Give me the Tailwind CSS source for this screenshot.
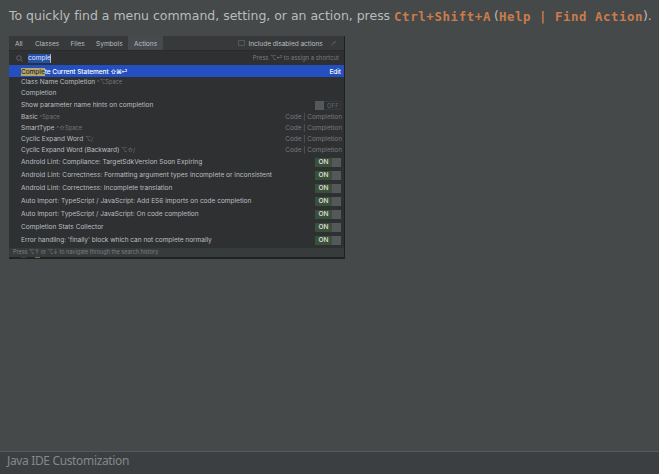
<!DOCTYPE html>
<html lang="en"><head><meta charset="utf-8"><title>Find Action</title>
<script src="https://cdn.jsdelivr.net/npm/@tailwindcss/browser@4"></script></head>
<body class="w-[659px] h-[474px] overflow-hidden bg-[#464949] whitespace-nowrap flex flex-col">
<p class="h-[36px] pl-[9px] pt-[6px] flex text-[12.5px]/[20px] tracking-[-0.02px] text-[#b9bcbd] font-['DejaVu_Sans',sans-serif]">
  <span class="w-[385px]">To quickly find a menu command, setting, or an action, press</span>
  <b class="w-[100px] text-[12.4px]/[21px] tracking-[0.62px] text-[#cb7c4b] font-['DejaVu_Sans_Mono',monospace]">Ctrl+Shift+A</b>
  <span class="w-[5px]">(</span>
  <b class="w-[144px] text-[12.4px]/[21px] tracking-[0.54px] text-[#cb7c4b] font-['DejaVu_Sans_Mono',monospace]">Help | Find Action</b>
  <span>).</span>
</p>
<main class="ml-[9px] w-[336px] h-[223px] shrink-0 flex flex-col bg-[#2e3032] border-r border-[#1f2122] text-[6.55px] text-[#bcbec0] font-[Inter,'DejaVu_Sans',sans-serif]">
  <nav class="h-[14px] shrink-0 flex items-center bg-[#37393b] leading-[8px]">
    <span class="w-[26px] pl-[6px] pt-px">All</span>
    <span class="w-[35.5px] pt-px">Classes</span>
    <span class="w-[25.5px] pt-px">Files</span>
    <span class="w-[32px] pt-px">Symbols</span>
    <span class="w-[35px] h-full pt-px flex items-center justify-center bg-[#464a4e]">Actions</span>
    <span class="ml-[75px] size-[6.5px] border border-[#55585a]"></span>
    <span class="ml-[4px] w-[81px] pt-px tracking-[-0.03px]">Include disabled actions</span>
    <svg class="size-[7px]" viewBox="0 0 7 7" fill="none" stroke="#505355"><path d="M1 6 3 4" stroke-width=".8"/><path d="M2.8 4.2 5.8 1.2" stroke-width="1.7"/></svg>
  </nav>
  <div class="h-[15px] shrink-0 flex items-center border-t border-[#292b2c] pl-[7px] pr-[5px]">
    <svg class="size-[7px]" viewBox="0 0 7 7" fill="none" stroke="#737678" stroke-width=".7"><circle cx="3" cy="3" r="2.3"/><path d="m4.7 4.7 2 2"/></svg>
    <span class="ml-[5px] h-[9px] leading-[9px] w-[23px] bg-[#2450ae] text-[#e4eaf6] border-r border-[#a3acbd]">comple</span>
    <span class="ml-auto text-[5.95px] text-[#7b7d7f]">Press ⌥⏎ to assign a shortcut</span>
  </div>
  <ul class="h-[183px] shrink-0 flex flex-col">
    <li class="h-[12px] pt-px pl-[12px] pr-[3px] flex items-center bg-[#244fc0] text-white leading-[8px] font-medium tracking-[-0.07px]"><span class="h-[8px] bg-[#b6a56c] text-[#272a2c]">Comple</span>te Current Statement&nbsp;<span class="text-[6px] tracking-[-0.7px]">⇧⌘⏎</span><span class="ml-auto">Edit</span></li>
    <li class="h-[11px] pl-[12px] flex items-center">Class Name Completion&nbsp;<span class="text-[5.6px] text-[#74777a]">^⌥Space</span></li>
    <li class="h-[11px] pl-[12px] flex items-center">Completion</li>
    <li class="h-[13px] pl-[12px] pr-[3px] flex items-center">Show parameter name hints on completion<span class="ml-auto w-[26px] h-[9px] flex items-center border border-[#383b3d] text-[6px] text-[#65686a]"><i class="w-[9px] h-[9px] -ml-px bg-[#55585a]"></i><span class="ml-[3px]">OFF</span></span></li>
    <li class="h-[11px] pl-[12px] pr-[2px] flex items-center">Basic&nbsp;<span class="text-[5.8px] text-[#74777a]">^Space</span><span class="ml-auto text-[6.45px] text-[#777a7c]">Code | Completion</span></li>
    <li class="h-[11px] pl-[12px] pr-[2px] flex items-center">SmartType&nbsp;<span class="text-[5.8px] text-[#74777a]">^⇧Space</span><span class="ml-auto text-[6.45px] text-[#777a7c]">Code | Completion</span></li>
    <li class="h-[11px] pl-[12px] pr-[2px] flex items-center">Cyclic Expand Word&nbsp;<span class="text-[5.8px] text-[#74777a]">⌥/</span><span class="ml-auto text-[6.45px] text-[#777a7c]">Code | Completion</span></li>
    <li class="h-[11px] pl-[12px] pr-[2px] flex items-center"><span class="tracking-[-0.04px]">Cyclic Expand Word (Backward)</span>&nbsp;<span class="text-[5.8px] text-[#74777a]">⌥⇧/</span><span class="ml-auto text-[6.45px] text-[#777a7c]">Code | Completion</span></li>
    <li class="h-[13px] pl-[12px] pr-[3px] flex items-center">Android Lint: Compliance: TargetSdkVersion Soon Expiring<span class="ml-auto w-[26px] h-[9px] flex items-center bg-[#3b5039] text-[#e0e4e0] font-medium pl-[3.5px]">ON<i class="ml-auto w-[9px] h-full bg-[#55585a]"></i></span></li>
    <li class="h-[13px] pl-[12px] pr-[3px] flex items-center"><span class="tracking-[0.015px]">Android Lint: Correctness: Formatting argument types incomplete or inconsistent</span><span class="ml-auto w-[26px] h-[9px] flex items-center bg-[#3b5039] text-[#e0e4e0] font-medium pl-[3.5px]">ON<i class="ml-auto w-[9px] h-full bg-[#55585a]"></i></span></li>
    <li class="h-[13px] pl-[12px] pr-[3px] flex items-center">Android Lint: Correctness: Incomplete translation<span class="ml-auto w-[26px] h-[9px] flex items-center bg-[#3b5039] text-[#e0e4e0] font-medium pl-[3.5px]">ON<i class="ml-auto w-[9px] h-full bg-[#55585a]"></i></span></li>
    <li class="h-[13px] pl-[12px] pr-[3px] flex items-center"><span class="tracking-[-0.012px]">Auto Import: TypeScript / JavaScript: Add ES6 imports on code completion</span><span class="ml-auto w-[26px] h-[9px] flex items-center bg-[#3b5039] text-[#e0e4e0] font-medium pl-[3.5px]">ON<i class="ml-auto w-[9px] h-full bg-[#55585a]"></i></span></li>
    <li class="h-[13px] pl-[12px] pr-[3px] flex items-center"><span class="tracking-[-0.02px]">Auto Import: TypeScript / JavaScript: On code completion</span><span class="ml-auto w-[26px] h-[9px] flex items-center bg-[#3b5039] text-[#e0e4e0] font-medium pl-[3.5px]">ON<i class="ml-auto w-[9px] h-full bg-[#55585a]"></i></span></li>
    <li class="h-[13px] pl-[12px] pr-[3px] flex items-center">Completion Stats Collector<span class="ml-auto w-[26px] h-[9px] flex items-center bg-[#3b5039] text-[#e0e4e0] font-medium pl-[3.5px]">ON<i class="ml-auto w-[9px] h-full bg-[#55585a]"></i></span></li>
    <li class="h-[13px] pl-[12px] pr-[3px] flex items-center"><span class="tracking-[-0.03px]">Error handling: 'finally' block which can not complete normally</span><span class="ml-auto w-[26px] h-[9px] flex items-center bg-[#3b5039] text-[#e0e4e0] font-medium pl-[3.5px]">ON<i class="ml-auto w-[9px] h-full bg-[#55585a]"></i></span></li>
  </ul>
  <footer class="h-[9px] shrink-0 pl-[4px] flex items-center bg-[#383b3c] text-[5.5px] text-[#7c7f80]">Press ⌥↑ or ⌥↓ to navigate through the search history</footer>
  <div class="h-[2px] shrink-0 bg-[#202223] flex pl-[12px]"><i class="w-[5px] h-px bg-[#3c3e40]"></i><i class="ml-[9px] w-[5px] h-px bg-[#73704c]"></i></div>
</main>
<footer class="mt-auto h-[23px] shrink-0 border-t border-[#57595b] bg-[#3c3f41] pl-[7px] text-[12px]/[18px] tracking-[-0.35px] text-[#85888a] font-['Noto_Sans',sans-serif]">Java IDE Customization</footer>
</body></html>
